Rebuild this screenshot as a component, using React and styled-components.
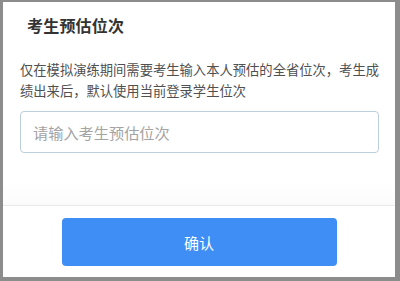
import React, { useState } from 'react';
import styled, { createGlobalStyle } from 'styled-components';

const GlobalStyle = createGlobalStyle`
    html, body {
        margin: 0;
        padding: 0;
        background: #8c8c8c;
    }
    body {
        font-family: "Noto Sans CJK SC", "Noto Sans", sans-serif;
    }
`;

const Frame = styled.div`
    box-sizing: border-box;
    height: 281px;
    padding: 2px 5px 4px 3px;
    background: #8c8c8c;
`;

const Dialog = styled.div`
    height: 100%;
    display: flex;
    flex-direction: column;
    background: #ffffff;
`;

const Header = styled.div`
    height: 46px;
    display: flex;
    align-items: center;
    padding-left: 24px;
`;

const Title = styled.h3`
    margin: 0;
    font-size: 16px;
    font-weight: 700;
    color: #333333;
    letter-spacing: 0.2px;
`;

const Body = styled.div`
    flex: 1;
    padding: 11px 16px 0 17px;
    background: linear-gradient(to bottom, #ffffff 85%, #fbfbfb 100%);
`;

const Hint = styled.p`
    margin: 0;
    font-size: 13.3px;
    line-height: 21px;
    color: #505050;
`;

const Input = styled.input`
    box-sizing: border-box;
    display: block;
    width: 100%;
    height: 42px;
    margin-top: 10px;
    padding: 0 12px;
    border: 1px solid #bccfdc;
    border-radius: 4px;
    font-family: inherit;
    font-size: 15.2px;
    color: #333333;
    outline: none;

    &::placeholder {
        color: #a3a3a3;
    }
`;

const Footer = styled.div`
    border-top: 1px solid #e9e9e9;
    padding: 12px 0 11px;
    display: flex;
    justify-content: center;
`;

const ConfirmButton = styled.button`
    width: 275px;
    height: 48px;
    border: none;
    border-radius: 4px;
    background: #3e8ef6;
    color: #ffffff;
    font-family: inherit;
    font-size: 15px;
    cursor: pointer;
`;

const App = () => {
    const [rank, setRank] = useState('');

    return (
        <Frame>
            <GlobalStyle />
            <Dialog>
                <Header>
                    <Title>考生预估位次</Title>
                </Header>
                <Body>
                    <Hint>
                        仅在模拟演练期间需要考生输入本人预估的全省位次，考生成绩出来后，默认使用当前登录学生位次
                    </Hint>
                    <Input
                        type="text"
                        placeholder="请输入考生预估位次"
                        value={rank}
                        onChange={(e) => setRank(e.target.value)}
                    />
                </Body>
                <Footer>
                    <ConfirmButton>确认</ConfirmButton>
                </Footer>
            </Dialog>
        </Frame>
    );
};

export default App;
